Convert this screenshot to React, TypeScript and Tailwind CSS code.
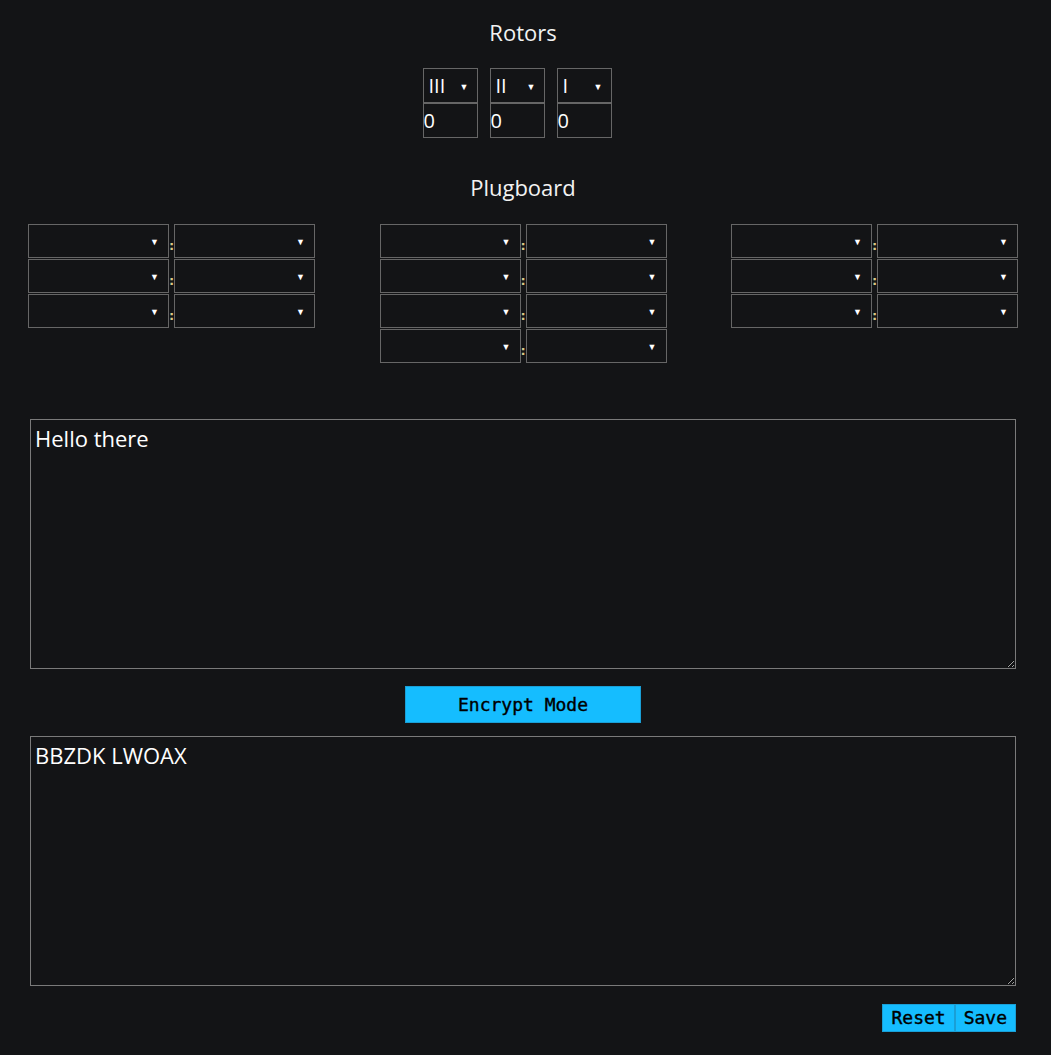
import { useState } from "react";

const LETTERS = "ABCDEFGHIJKLMNOPQRSTUVWXYZ".split("");

const Arrow = () => (
    <span className="pointer-events-none absolute right-[10px] top-1/2 -translate-y-1/2 text-[9px] leading-none text-white">▼</span>
);

const PlugSelect = () => (
    <div className="relative">
        <select className="block h-[34px] w-[141px] appearance-none border border-[#666] bg-[#131416] px-1 text-white outline-none">
            <option value=""></option>
            {LETTERS.map((l) => <option key={l} value={l}>{l}</option>)}
        </select>
        <Arrow />
    </div>
);

const PlugGroup = ({ rows }: { rows: number }) => (
    <div className="flex flex-col gap-px">
        {Array.from({ length: rows }).map((_, i) => (
            <div key={i} className="flex items-center">
                <PlugSelect />
                <span className="w-[5px] pt-[8px] text-center font-['DejaVu_Sans',sans-serif] text-[13px] font-bold leading-none text-[#d9c98a]">:</span>
                <PlugSelect />
            </div>
        ))}
    </div>
);

const Rotor = ({ label }: { label: string }) => (
    <div className="flex flex-col">
        <div className="relative">
            <select defaultValue={label} className="block h-[35px] w-[55px] appearance-none border border-[#666] bg-[#131416] pl-[5px] text-[20px] text-white outline-none">
                {["I", "II", "III", "IV", "V"].map((r) => <option key={r} value={r}>{r}</option>)}
            </select>
            <span className="pointer-events-none absolute right-[9px] top-1/2 -translate-y-1/2 text-[9px] leading-none text-white">▼</span>
        </div>
        <input defaultValue="0" className="block h-[35px] w-[55px] border border-[#666] bg-[#131416] px-0 text-[20px] text-white outline-none" />
    </div>
);

export default function App() {
    const [input, setInput] = useState("Hello there");

    return (
        <div className="min-h-[1055px] bg-[#131416] font-['Open_Sans',sans-serif] text-[#f2f2f2]">
            <div className="flex flex-col items-center pt-[17px]">
                <h2 className="ml-[-5px] text-[22px] leading-[30px]">Rotors</h2>
                <div className="mt-[21px] mr-[17px] flex gap-[12px]">
                    <Rotor label="III" />
                    <Rotor label="II" />
                    <Rotor label="I" />
                </div>
                <h2 className="mt-[34px] ml-[-5px] text-[22px] leading-[30px]">Plugboard</h2>
            </div>

            <div className="mt-[22px] flex items-start justify-between pl-[28px] pr-[33px]">
                <PlugGroup rows={3} />
                <PlugGroup rows={4} />
                <PlugGroup rows={3} />
            </div>

            <div className="mt-[56px] flex flex-col items-center pl-[30px] pr-[35px]">
                <textarea
                    value={input}
                    onChange={(e) => setInput(e.target.value)}
                    className="block h-[250px] w-full border border-[#7a7a7a] bg-[#131416] px-[4px] py-[3px] text-[22px] leading-[30px] text-white outline-none"
                />
                <button className="mt-[17px] h-[37px] w-[236px] border border-[#1a9fd6] bg-[#15bdff] font-['DejaVu_Sans_Mono',monospace] text-[18px] text-black [-webkit-text-stroke:0.4px_black]">
                    Encrypt Mode
                </button>
                <textarea
                    readOnly
                    value="BBZDK LWOAX"
                    className="mt-[13px] block h-[250px] w-full border border-[#7a7a7a] bg-[#131416] px-[4px] py-[3px] text-[22px] leading-[30px] text-white outline-none"
                />
                <div className="mt-[18px] flex self-end">
                    <button className="h-[28px] border border-[#1a9fd6] bg-[#15bdff] px-[8px] font-['DejaVu_Sans_Mono',monospace] text-[18px] leading-none text-black [-webkit-text-stroke:0.4px_black]">Reset</button>
                    <button className="h-[28px] border border-[#1a9fd6] bg-[#15bdff] px-[8px] font-['DejaVu_Sans_Mono',monospace] text-[18px] leading-none text-black [-webkit-text-stroke:0.4px_black]">Save</button>
                </div>
            </div>
        </div>
    );
}
